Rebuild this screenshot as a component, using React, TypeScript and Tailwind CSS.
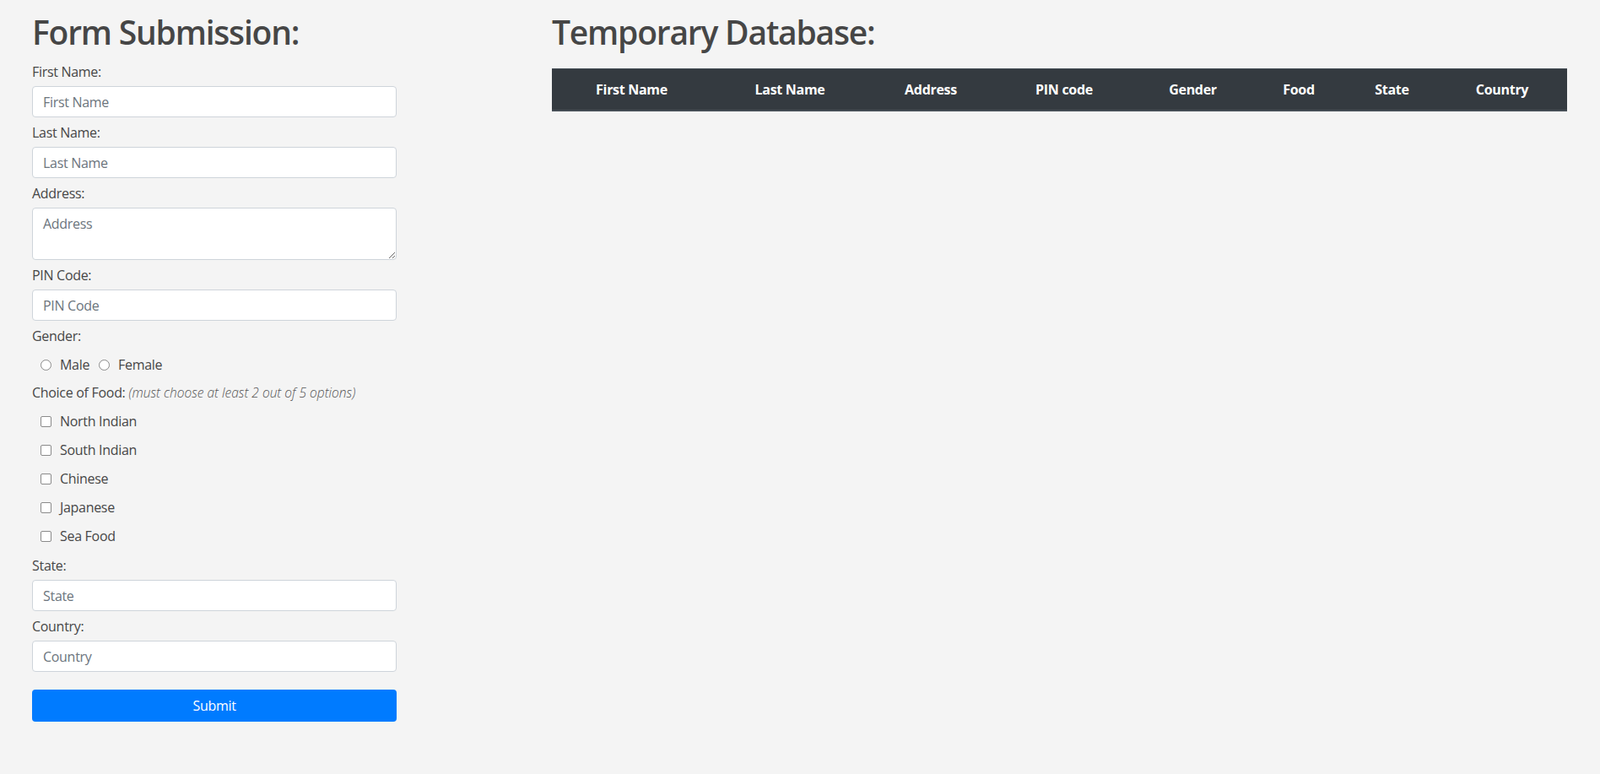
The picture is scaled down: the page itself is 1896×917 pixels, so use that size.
import React, { useState } from "react";

const foods = ["North Indian", "South Indian", "Chinese", "Japanese", "Sea Food"];
const columns = [
  { name: "First Name", w: "w-[189px]" },
  { name: "Last Name", w: "w-[186px]" },
  { name: "Address", w: "w-[148px]" },
  { name: "PIN code", w: "w-[168px]" },
  { name: "Gender", w: "w-[137px]" },
  { name: "Food", w: "w-[114px]" },
  { name: "State", w: "w-[107px]" },
  { name: "Country", w: "w-[154px]" },
];

const inputCls =
  "block w-full h-[37px] px-[12px] bg-white border border-[#ced4da] rounded-[4px] text-[16px] text-[#495057] placeholder:text-[#6c757d] outline-none";

const Label = ({ children, className = "" }: { children: React.ReactNode; className?: string }) => (
  <label className={`block leading-6 text-[16px] ${className}`}>{children}</label>
);

const App = () => {
  const [gender, setGender] = useState("");
  const [food, setFood] = useState<string[]>([]);

  const toggleFood = (f: string) =>
    setFood(food.includes(f) ? food.filter((x) => x !== f) : [...food, f]);

  return (
    <div className="min-h-screen bg-[#f4f4f4] text-[#474747] font-['Open_Sans',sans-serif] tracking-[-0.3px] flex pl-[38px] pr-[39px] pt-[14px]">
      {/* Form */}
      <div className="w-[432px] shrink-0">
        <h1 className="text-[39px] leading-[48px] font-semibold text-[#464646] mb-[11px] tracking-[-1.2px]">Form Submission:</h1>
        <form onSubmit={(e) => e.preventDefault()}>
          <Label className="mt-[6px] mb-[5px]">First Name:</Label>
          <input className={inputCls} placeholder="First Name" />
          <Label className="mt-[6px] mb-[5px]">Last Name:</Label>
          <input className={inputCls} placeholder="Last Name" />
          <Label className="mt-[6px] mb-[5px]">Address:</Label>
          <textarea
            rows={2}
            className="block w-full h-[62px] px-[12px] py-[6px] leading-6 bg-white border border-[#ced4da] rounded-[4px] text-[16px] text-[#495057] placeholder:text-[#6c757d] outline-none"
            placeholder="Address"
          />
          <Label className="mt-[6px] mb-[5px]">PIN Code:</Label>
          <input className={inputCls} placeholder="PIN Code" />
          <Label className="mt-[6px]">Gender:</Label>
          <div className="flex items-center h-6 mt-[10px] pl-[10px]">
            {["Male", "Female"].map((g) => (
              <label key={g} className="flex items-center mr-[11px] leading-6">
                <input
                  type="radio"
                  name="gender"
                  checked={gender === g}
                  onChange={() => setGender(g)}
                  className="appearance-none w-[13px] h-[13px] rounded-full border border-[#8a8a8a] bg-white checked:bg-[#0075ff] mr-[10px]"
                />
                {g}
              </label>
            ))}
          </div>
          <Label className="mt-[9px]">
            Choice of Food:{" "}
            <i className="text-[15.5px] font-light tracking-normal text-[#555]">(must choose at least 2 out of 5 options)</i>
          </Label>
          {foods.map((f) => (
            <label key={f} className="flex items-center h-6 mt-[10px] pl-[10px] leading-6">
              <input
                type="checkbox"
                checked={food.includes(f)}
                onChange={() => toggleFood(f)}
                className="appearance-none w-[13px] h-[13px] rounded-[2px] border border-[#8a8a8a] bg-white checked:bg-[#0075ff] mr-[10px]"
              />
              {f}
            </label>
          ))}
          <Label className="mt-[11px] mb-[5px]">State:</Label>
          <input className={inputCls} placeholder="State" />
          <Label className="mt-[6px] mb-[5px]">Country:</Label>
          <input className={inputCls} placeholder="Country" />
          <button
            type="submit"
            className="block w-full h-[38px] mt-[21px] bg-[#007bff] text-white text-[16px] rounded-[4px]"
          >
            Submit
          </button>
        </form>
      </div>

      {/* Table */}
      <div className="flex-1 ml-[184px]">
        <h1 className="text-[39px] leading-[48px] font-semibold text-[#464646] mb-[19px] tracking-[-1.2px]">Temporary Database:</h1>
        <table className="w-full table-fixed border-collapse">
          <thead>
            <tr className="bg-[#343a40] text-white">
              {columns.map((c) => (
                <th
                  key={c.name}
                  className={`${c.w} px-3 py-3 text-center font-bold text-[16px] leading-6 border-t border-b-2 border-[#454d55]`}
                >
                  {c.name}
                </th>
              ))}
            </tr>
          </thead>
          <tbody></tbody>
        </table>
      </div>
    </div>
  );
};

export default App;
